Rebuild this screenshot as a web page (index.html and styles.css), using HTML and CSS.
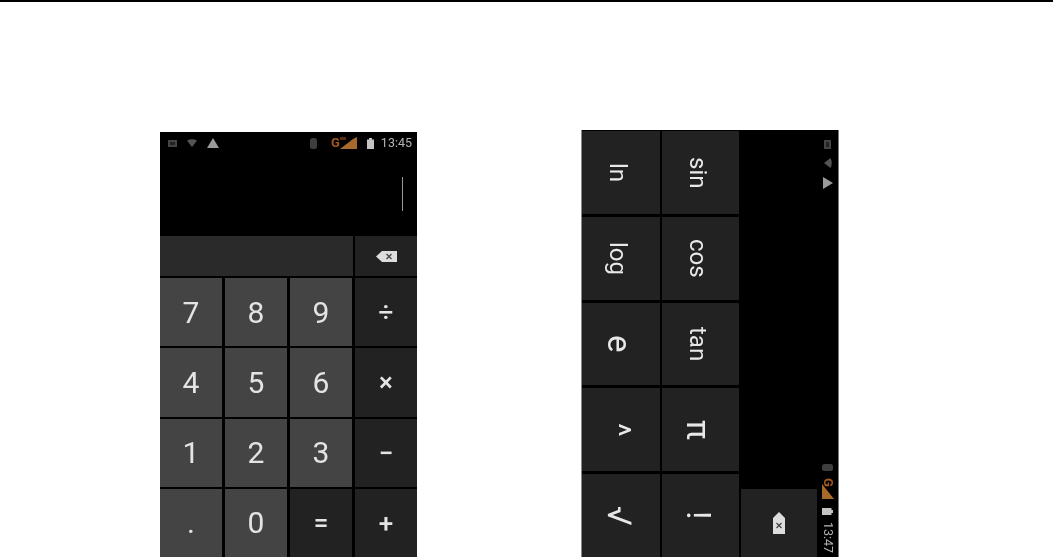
FILE: index.html
```html
<!DOCTYPE html>
<html lang="en">
<head>
    <meta charset="UTF-8">
    <meta name="viewport" content="width=device-width, initial-scale=1.0">
    <title>Calculator screenshots</title>
    <link rel="stylesheet" href="styles.css">
</head>
<body>
    <div class="shots">
        <!-- portrait: basic keypad -->
        <div class="phone">
            <div class="status">
                <div class="status-icons">
                    <svg class="ic" width="9" height="7" viewBox="0 0 9 7"><path d="M0 0h9v7H0z" fill="#444"/><path d="M2 2h5v3H2z" fill="#222"/></svg>
                    <svg class="ic" width="10" height="8" viewBox="0 0 10 8"><path d="M0 1.500Q5-1 10 1.500L5 8z" fill="#555"/></svg>
                    <svg class="ic" width="12" height="10" viewBox="0 0 12 10"><path d="M6 0l6 10H0z" fill="#999"/></svg>
                </div>
                <div class="status-icons">
                    <svg class="ic" width="7" height="11" viewBox="0 0 7 11"><rect width="7" height="11" rx="2.500" fill="#3e3e3e"/></svg>
                    <span class="net">G</span>
                    <svg class="ic" width="17" height="12" viewBox="0 0 17 12"><path d="M0 12L13 2l4-2v12z" fill="#a86a2a"/><path d="M0 0h6v3H0z" fill="#5a2d10"/></svg>
                    <svg class="ic" width="7" height="11" viewBox="0 0 7 11"><path d="M2 0h3v1.500h2V11H0V1.500h2z" fill="#c4c4c4"/></svg>
                    <span class="time">13:45</span>
                </div>
            </div>
            <div class="display"><span class="cursor"></span></div>
            <div class="pad">
                <div class="key key-clear"></div>
                <div class="key key-op">
                    <svg width="21" height="11" viewBox="0 0 21 11"><path d="M6 0h15v11H6L0 5.500z" fill="#ddd"/><path d="M10.500 3l5 5m0-5l-5 5" stroke="#444" stroke-width="1.300"/></svg>
                </div>
                <div class="key">7</div>
                <div class="key">8</div>
                <div class="key">9</div>
                <div class="key key-op">÷</div>
                <div class="key">4</div>
                <div class="key">5</div>
                <div class="key">6</div>
                <div class="key key-op">×</div>
                <div class="key">1</div>
                <div class="key">2</div>
                <div class="key">3</div>
                <div class="key key-op">−</div>
                <div class="key">.</div>
                <div class="key">0</div>
                <div class="key key-op">=</div>
                <div class="key key-op">+</div>
            </div>
        </div>

        <!-- landscape: advanced keypad, captured sideways -->
        <div class="phone phone-side">
            <div class="side-pad">
                <div class="side-key">ln</div>
                <div class="side-key">sin</div>
                <div class="side-gap"></div>
                <div class="side-key">log</div>
                <div class="side-key">cos</div>
                <div class="side-gap"></div>
                <div class="side-key side-sym">e</div>
                <div class="side-key">tan</div>
                <div class="side-gap"></div>
                <div class="side-key side-sym side-caret">^</div>
                <div class="side-key side-sym">π</div>
                <div class="side-gap"></div>
                <div class="side-key side-sym">√</div>
                <div class="side-key side-sym">!</div>
                <div class="side-key side-del">
                    <svg width="12" height="22" viewBox="0 0 12 22"><path d="M6 0l6 6v16H0V6z" fill="#ddd"/><path d="M3.500 11l5 5m0-5l-5 5" stroke="#444" stroke-width="1.300"/></svg>
                </div>
            </div>
            <div class="side-status">
                <div class="side-icons">
                    <svg class="ic" width="7" height="9" viewBox="0 0 7 9"><path d="M0 0h7v9H0z" fill="#444"/><path d="M2 2h3v5H2z" fill="#222"/></svg>
                    <svg class="ic" width="8" height="10" viewBox="0 0 8 10"><path d="M6.500 0Q9 5 6.500 10L0 5z" fill="#555"/></svg>
                    <svg class="ic" width="10" height="12" viewBox="0 0 10 12"><path d="M10 6L0 12V0z" fill="#999"/></svg>
                </div>
                <div class="side-icons">
                    <svg class="ic" width="11" height="7" viewBox="0 0 11 7"><rect width="11" height="7" rx="2.500" fill="#3e3e3e"/></svg>
                    <span class="net net-side">G</span>
                    <svg class="ic" width="12" height="15" viewBox="0 0 12 15"><path d="M12 15L0 15V0z" fill="#a86a2a"/></svg>
                    <svg class="ic" width="11" height="7" viewBox="0 0 11 7"><path d="M0 0h9.500v2H11v3H9.500v2H0z" fill="#c4c4c4"/></svg>
                    <span class="time time-side">13:47</span>
                </div>
            </div>
        </div>
    </div>
</body>
</html>
```

FILE: styles.css
```css
body {
    margin: 0;
    height: 559px;
    box-sizing: border-box;
    border-top: 2px solid #000;
    background-color: #fff;
    font-family: Roboto, "Liberation Sans", sans-serif;
    overflow: hidden;
}

.shots {
    display: flex;
    align-items: flex-end;
    gap: 164px;
    height: 100%;
    box-sizing: border-box;
    padding: 0 0 2px 160px;
}

.phone {
    display: flex;
    flex-direction: column;
    width: 257px;
    height: 425px;
    background-color: #000;
    filter: blur(0.7px);
}

/* 상태바 */
.status {
    display: flex;
    justify-content: space-between;
    align-items: center;
    height: 22px;
    padding: 0 5px 0 8px;
}

.status-icons {
    display: flex;
    align-items: center;
    gap: 10px;
}

.status-icons .net {
    margin: 0 -10px 0 4px;
}

.ic {
    display: block;
    flex: none;
}

.net {
    color: #a3581f;
    font-size: 13px;
    font-weight: 700;
    line-height: 12px;
}

.time {
    color: #b5b5b5;
    font-size: 12.5px;
    line-height: 12px;
    margin-left: -3px;
}

.display {
    flex: 1;
    display: flex;
    justify-content: flex-end;
    align-items: flex-start;
    padding: 23px 14px 0 0;
}

.cursor {
    width: 1px;
    height: 34px;
    background-color: #999;
}

.pad {
    display: grid;
    grid-template-columns: repeat(4, 1fr);
    grid-template-rows: 40px repeat(4, 1fr);
    gap: 2px 3px;
    height: 321px;
}

.key {
    display: flex;
    justify-content: center;
    align-items: center;
    background-color: #444;
    color: #e4e4e4;
    font-size: 30px;
    font-weight: 400;
}

.key-op {
    background-color: #222;
    font-size: 26px;
    font-weight: 500;
}

.key-clear {
    grid-column: span 3;
    background-color: #2a2a2a;
    margin-right: -0.5px;
}

/* 가로 화면 */
.phone-side {
    flex-direction: row;
    width: 258px;
    height: 427px;
    box-sizing: border-box;
    border-left: 1px solid #888;
    border-right: 1px solid #777;
}

.side-pad {
    flex: 1;
    display: grid;
    grid-template-columns: 78px 77px 76px;
    grid-template-rows: repeat(5, 1fr);
    gap: 3px 2px;
    padding-top: 1px;
}

.side-key {
    display: flex;
    justify-content: center;
    align-items: center;
    background-color: #222;
    color: #e8e8e8;
    font-size: 24px;
    font-weight: 400;
    writing-mode: vertical-rl;
    padding-right: 6px;
}

.side-sym {
    font-size: 33px;
    padding-right: 4px;
}

.side-caret {
    padding-right: 6px;
}

.side-del {
    align-self: end;
    height: 68px;
    padding-right: 0;
}

.side-status {
    width: 21px;
    display: flex;
    flex-direction: column;
    justify-content: space-between;
    align-items: center;
    padding: 10px 0 4px;
    box-sizing: border-box;
}

.side-icons {
    display: flex;
    flex-direction: column;
    align-items: center;
    gap: 9px;
}

.net-side {
    writing-mode: vertical-rl;
    margin: -2px 0 -12px;
}

.time-side {
    writing-mode: vertical-rl;
    margin: -2px 0 0;
}
```
